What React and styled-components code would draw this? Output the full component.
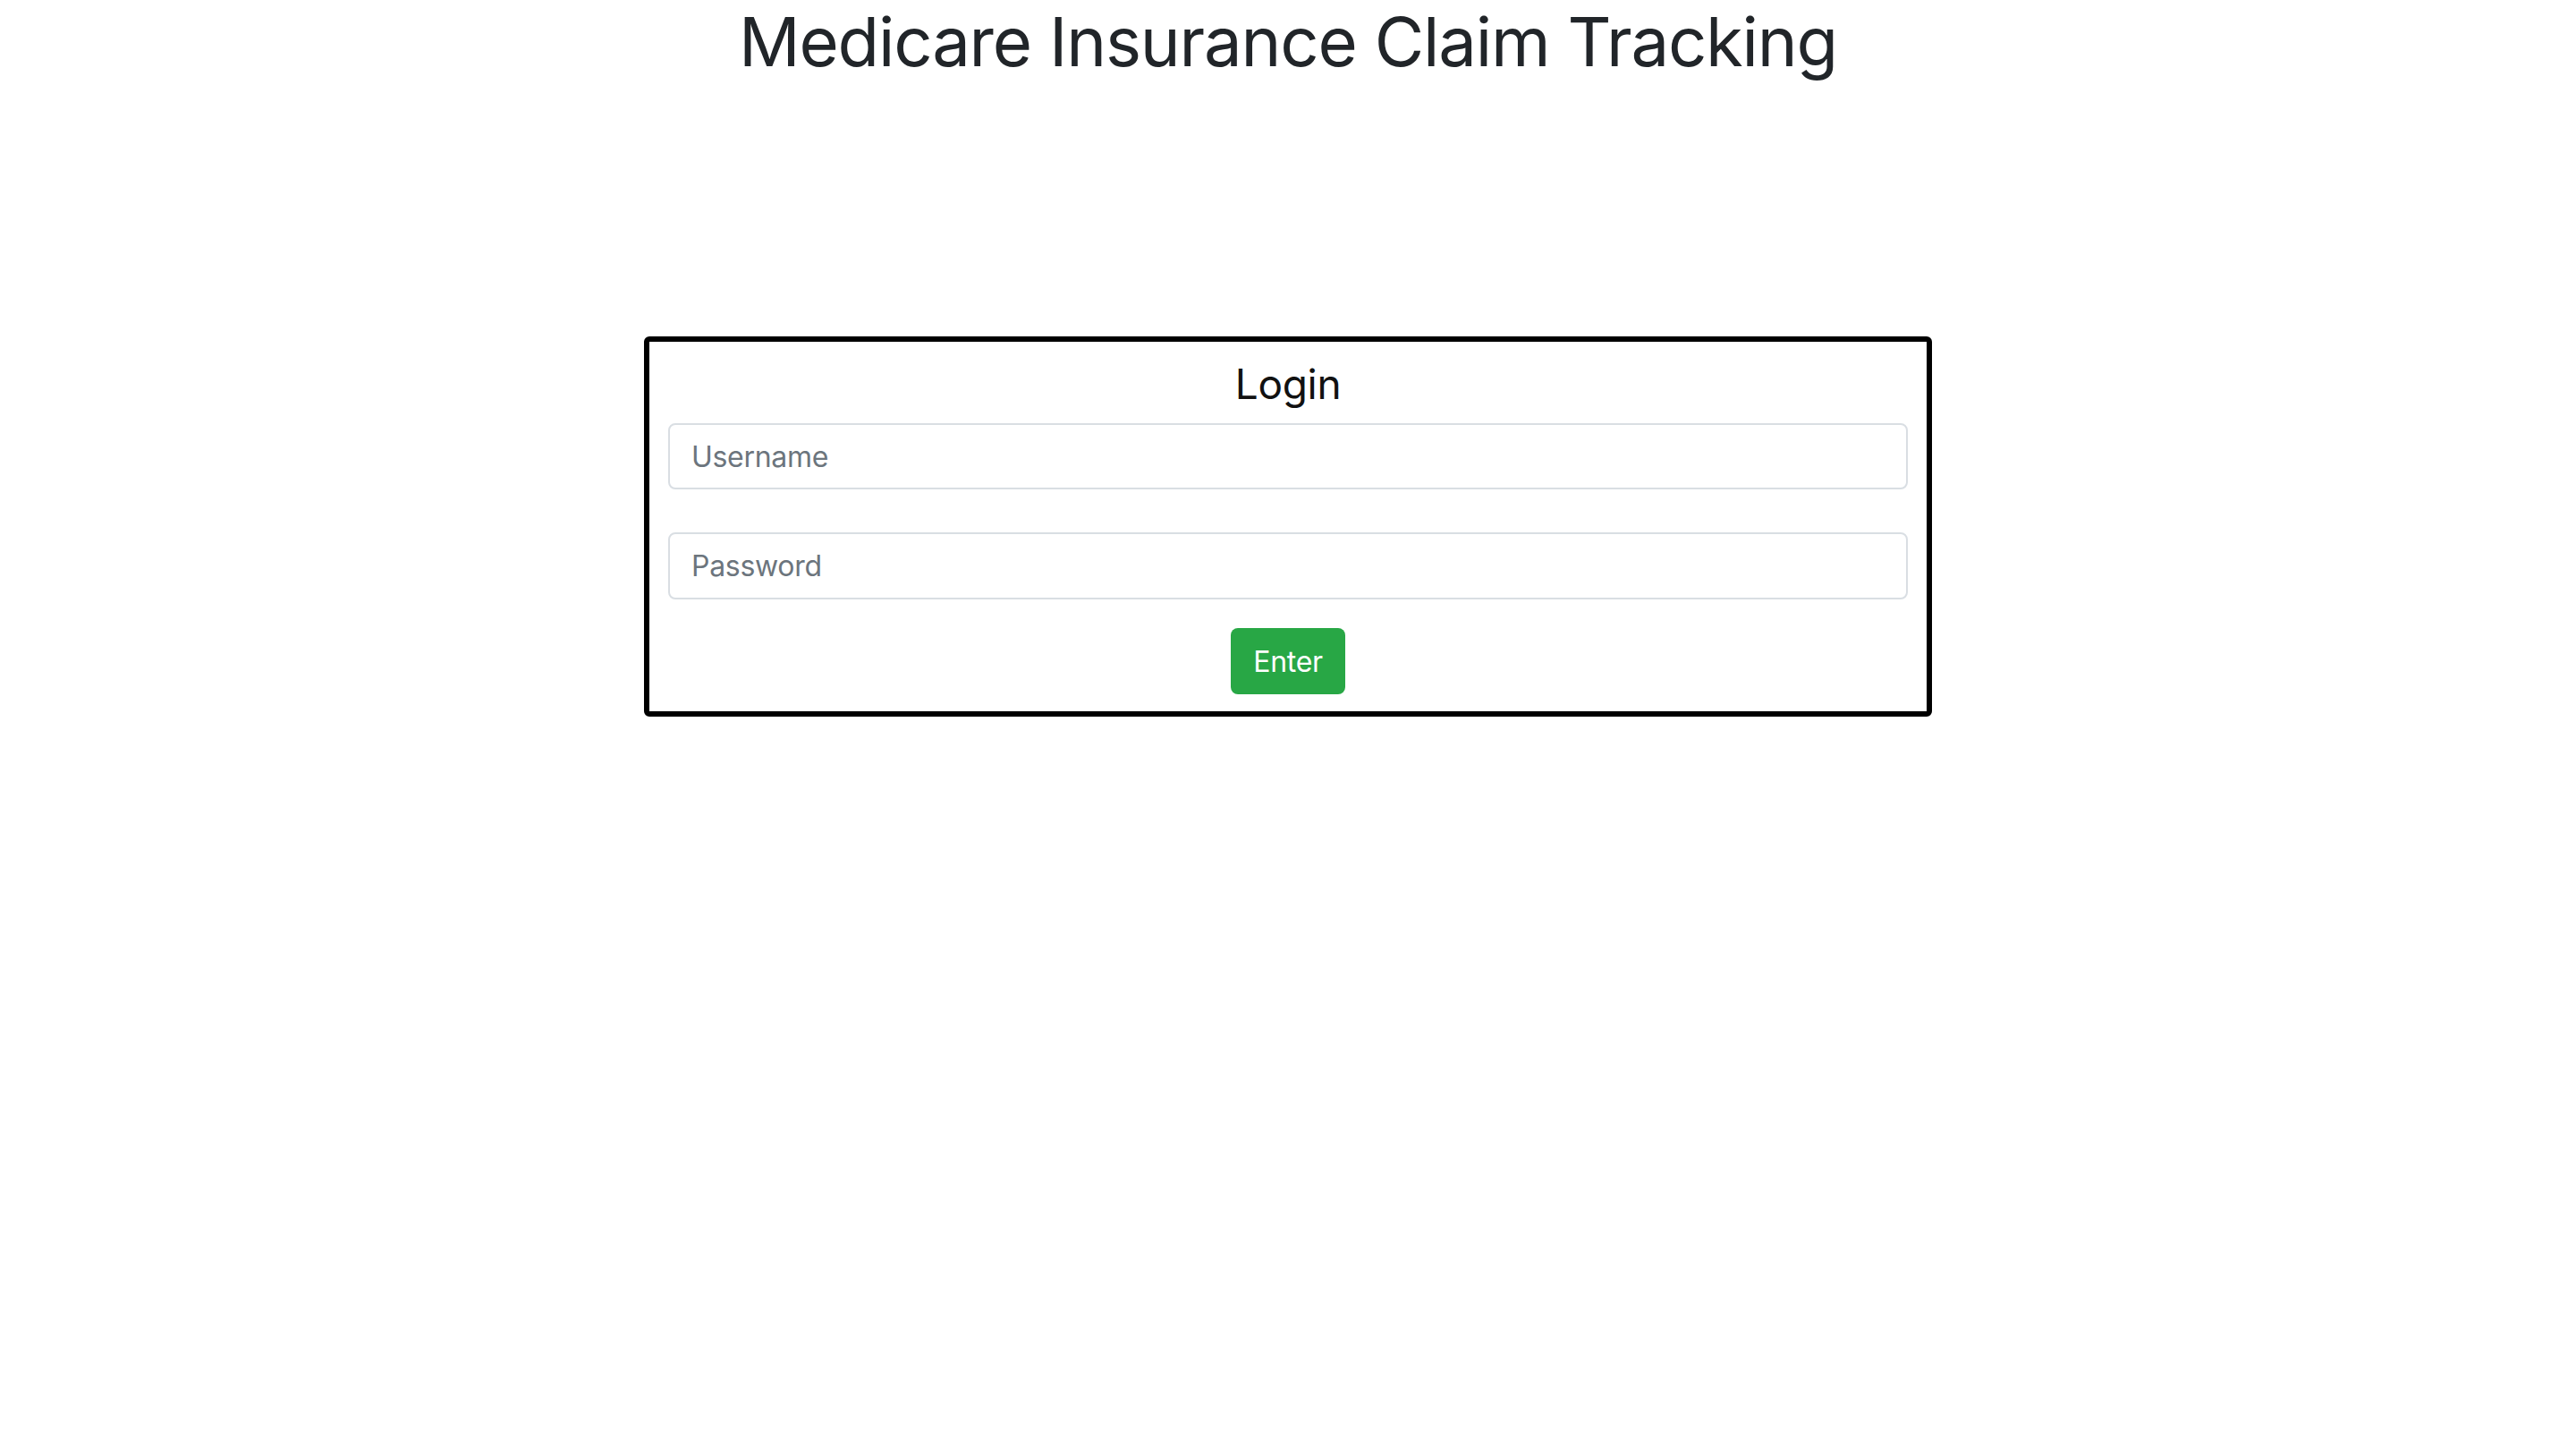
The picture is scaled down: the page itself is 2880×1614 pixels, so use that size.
import React from "react";
import styled, { createGlobalStyle } from "styled-components";

const GlobalStyle = createGlobalStyle`
  body {
    margin: 0;
    background: #fff;
    font-family: Inter, "Liberation Sans", sans-serif;
    color: #212529;
  }
`;

const Page = styled.div`
  display: flex;
  flex-direction: column;
  align-items: center;
  min-height: 1614px;
`;

const Title = styled.h1`
  margin: 0;
  font-size: 76px;
  line-height: 92px;
  font-weight: 400;
  letter-spacing: -1.2px;
  text-align: center;
  color: #212529;
`;

const Card = styled.form`
  box-sizing: border-box;
  width: 1440px;
  margin-top: 284px;
  padding: 19px 21px 19px;
  border: 6px solid #000;
  border-radius: 6px;
  display: flex;
  flex-direction: column;
`;

const Heading = styled.h3`
  margin: 0 0 16px;
  font-size: 46px;
  line-height: 56px;
  font-weight: 400;
  letter-spacing: -0.3px;
  text-align: center;
  color: #111;
`;

const Field = styled.input`
  box-sizing: border-box;
  width: 100%;
  height: ${(props) => props.h}px;
  margin-bottom: ${(props) => props.gap}px;
  padding: 0 24px;
  border: 2px solid #d9dee3;
  border-radius: 8px;
  font-family: inherit;
  font-size: 32px;
  letter-spacing: -0.3px;
  color: #495057;
  outline: none;

  &::placeholder {
    color: #6c757d;
  }
`;

const Enter = styled.button`
  align-self: center;
  box-sizing: border-box;
  width: 128px;
  height: 74px;
  border: none;
  border-radius: 8px;
  background: #28a745;
  color: #fff;
  font-family: inherit;
  font-size: 32px;
  letter-spacing: -0.3px;
  cursor: pointer;
`;

export default function App() {
  return (
    <>
      <GlobalStyle />
      <Page>
        <Title>Medicare Insurance Claim Tracking</Title>
        <Card onSubmit={(e) => e.preventDefault()}>
          <Heading>Login</Heading>
          <Field type="text" placeholder="Username" h={74} gap={48} />
          <Field type="password" placeholder="Password" h={75} gap={32} />
          <Enter type="submit">Enter</Enter>
        </Card>
      </Page>
    </>
  );
}
